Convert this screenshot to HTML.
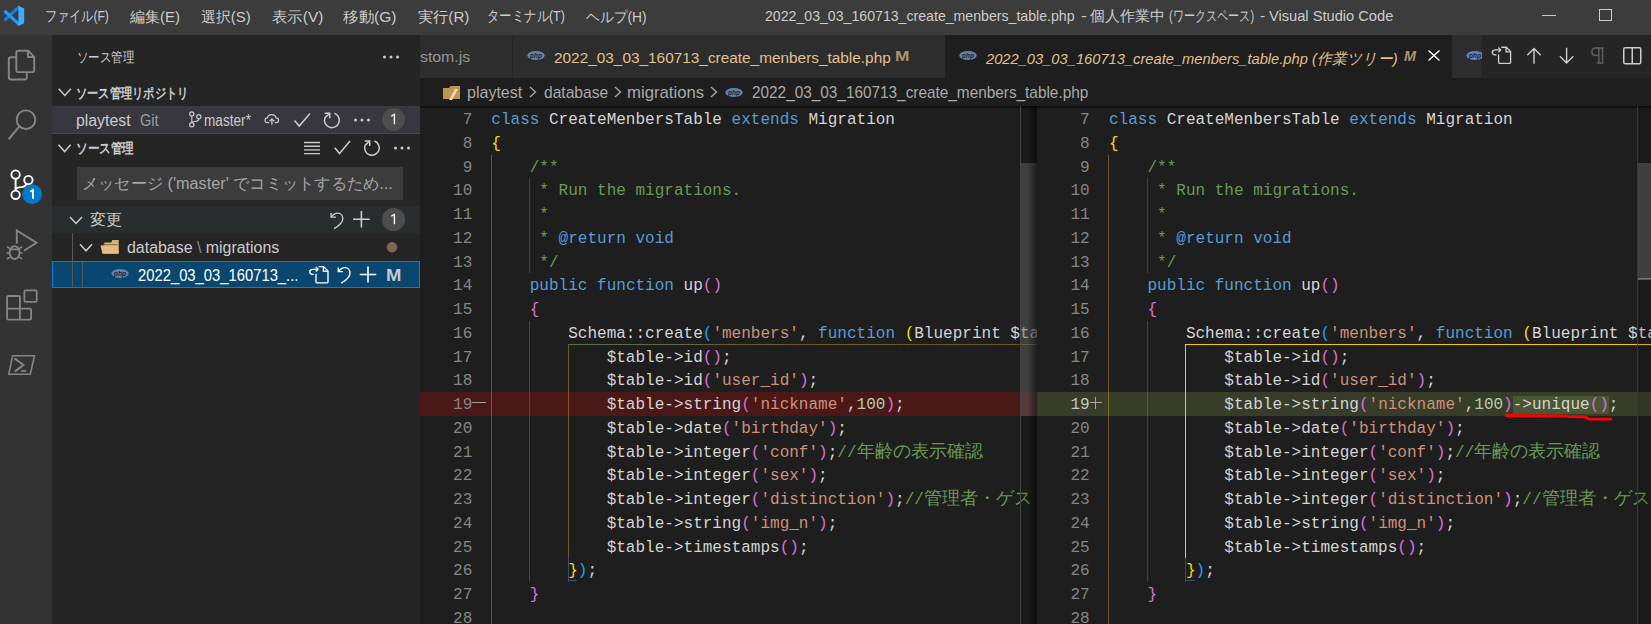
<!DOCTYPE html>
<html><head><meta charset="utf-8"><style>
*{box-sizing:border-box;margin:0;padding:0}
html,body{width:1651px;height:624px;overflow:hidden;background:#1e1e1e;font-family:"Liberation Sans",sans-serif;color:#cccccc}
.abs{position:absolute}
#title{position:absolute;left:0;top:0;width:1651px;height:35px;background:#3c3c3c}
.menu{position:absolute;top:0;height:35px;line-height:35px;font-size:15px;color:#cccccc;white-space:nowrap}
#act{position:absolute;left:0;top:35px;width:52px;height:589px;background:#333333}
#side{position:absolute;left:52px;top:35px;width:368px;height:589px;background:#252526}
.st{position:absolute;white-space:nowrap;font-size:14px;color:#cccccc}
#tabs{position:absolute;left:420px;top:35px;width:1231px;height:43px;background:#252526}
.tab{position:absolute;top:0;height:43px;background:#2d2d2d;white-space:nowrap;font-size:15.5px;line-height:43px}
#bc{position:absolute;left:420px;top:78px;width:1231px;height:28px;background:#1e1e1e;font-size:15.5px;line-height:28px;color:#a9a9a9;white-space:nowrap}
.ed{position:absolute;top:35px;height:589px;overflow:hidden}
.band{position:absolute;left:0;width:100%;height:23.75px}
.ln{position:absolute;margin-top:2px;left:0;width:52px;text-align:right;font-family:"Liberation Mono",monospace;font-size:16.03px;line-height:23.75px;color:#858585}
.ln.act{color:#c6c6c6}
.sign{position:absolute;margin-top:2px;left:52px;width:14px;font-family:"Liberation Mono",monospace;font-size:16.03px;line-height:23.75px;color:#c6c6c6}
.cl{position:absolute;margin-top:2px;left:71px;white-space:pre;font-family:"Liberation Mono",monospace;font-size:16.03px;line-height:23.75px;color:#d4d4d4}
.jp{font-size:17.5px;line-height:0}
.ins{background:#4b5632}
.T{position:absolute;white-space:nowrap;transform-origin:0 0}
.g{position:absolute}
.g{z-index:1}
.cl,.ln,.sign{z-index:2}
.C{position:absolute;overflow:hidden;z-index:8}

</style></head><body>
<div id="title">
  <svg class="abs" style="left:0;top:0" width="35" height="35" viewBox="0 0 35 35">
    <path d="M18.6 7.4 L5.4 19.4" stroke="#1b7dcc" stroke-width="3.3" stroke-linecap="round"/>
    <path d="M5.4 11.8 L18.6 23.9" stroke="#229cf0" stroke-width="3.3" stroke-linecap="round"/>
    <path d="M18.4 5.7 L23.6 8.3 C24 8.5 24.2 8.8 24.2 9.3 V22.6 C24.2 23.1 24 23.4 23.6 23.6 L18.4 26.1 Z" fill="#3caeff"/>
  </svg>
                    <div class="abs" style="left:1542px;top:15px;width:14px;height:1px;background:#cccccc"></div>
  <div class="abs" style="left:1599px;top:8.6px;width:13.4px;height:12.8px;border:1.2px solid #cccccc"></div>
</div>
<div id="act">
  <svg class="abs" style="left:0;top:0" width="52" height="589" viewBox="0 35 52 589" fill="none" stroke="#858585" stroke-width="1.9">
    <!-- explorer -->
    <path d="M16.2 57.2 H11 C9.5 57.2 8.8 58 8.8 59.5 V77.3 C8.8 78.8 9.5 79.5 11 79.5 H24.6 C26.1 79.5 26.8 78.8 26.8 77.3 V72.2"/>
    <path d="M18.5 50.8 H28.2 L34.2 56.8 V69.9 C34.2 71.4 33.5 72.1 32 72.1 H18.5 C17 72.1 16.3 71.4 16.3 69.9 V53 C16.3 51.5 17 50.8 18.5 50.8 Z"/>
    <path d="M28 51 V57 H34"/>
    <!-- search -->
    <circle cx="26" cy="119.7" r="9.3"/>
    <path d="M19.4 126.3 L8.6 139.3" stroke-width="2.1"/>
    <!-- scm -->
    <g stroke="#ffffff" stroke-width="1.9">
      <circle cx="15.6" cy="174.6" r="4.2"/>
      <circle cx="28.4" cy="180.1" r="4.2"/>
      <circle cx="15.6" cy="194.8" r="4.2"/>
      <path d="M15.6 178.8 V190.6"/>
      <path d="M26.6 184 C25 186.6 22.5 187.4 19.5 187.4 C17 187.4 15.6 188.5 15.6 190"/>
    </g>
    <!-- debug -->
    <path d="M16.8 243.6 V230.4 L36.5 242.8 L24 250.8"/>
    <ellipse cx="14.6" cy="252.6" rx="4.9" ry="6.4" stroke-width="1.8"/>
    <path d="M9.8 249.4 H19.4 M10 248.6 L7 246.8 M6.6 253 H9.6 M10 257.2 L7 259.2 M19.2 248.6 L22.2 246.8 M19.6 253 H22.6 M19.2 257.2 L22.2 259.2" stroke-width="1.6"/>
    <!-- extensions -->
    <path d="M8.3 296 H18.7 C19.4 296 19.9 296.5 19.9 297.2 V308.6 H29.9 C30.6 308.6 31.1 309.1 31.1 309.8 V318.4 C31.1 319.1 30.6 319.6 29.9 319.6 H8.3 C7.6 319.6 7.1 319.1 7.1 318.4 V297.2 C7.1 296.5 7.6 296 8.3 296 Z M7.1 308.6 H19.9 V319.6" stroke-width="1.8"/>
    <rect x="24.4" y="290.4" width="12.3" height="11.5" rx="1.2" stroke-width="1.8"/>
    <!-- terminal -->
    <path d="M12.6 355.8 H34.5 L30.3 374.3 H8.75 Z" stroke-width="1.6"/>
    <path d="M14.4 358.4 L23.4 365 L14.8 371.6" stroke-width="2"/>
    <path d="M21 371 H26.2" stroke-width="1.8"/>
  </svg>
  <svg class="abs" style="left:0;top:0" width="52" height="589" viewBox="0 35 52 589">
    <circle cx="32.2" cy="194.2" r="9.9" fill="#007acc"/>
    <path d="M30.3 191.7 L33 189.8 V198.8" stroke="#ffffff" stroke-width="1.9" fill="none" stroke-linejoin="round"/>
  </svg>
</div>
<div id="side">
  <div class="abs" style="left:0;top:71px;width:368px;height:27.5px;background:#37373d"></div>
  <div class="abs" style="left:0;top:98px;width:368px;height:1px;background:#474748"></div>
  <div class="abs" style="left:25px;top:132px;width:325.5px;height:33px;background:#3c3c3c"></div>
  <div class="abs" style="left:0;top:170.5px;width:368px;height:27.5px;background:#2a2d2e"></div>
  <div class="abs" style="left:20px;top:198px;width:1px;height:55px;background:#585858"></div>
  <div class="abs" style="left:0;top:225.5px;width:368px;height:27.5px;background:#094771;border:1px solid #007fd4"></div>
  <div class="abs" style="left:20px;top:226.5px;width:1px;height:25.5px;background:#585858"></div>
  <div class="abs" style="left:30.4px;top:226.5px;width:1px;height:25.5px;background:#585858"></div>
</div>
<div id="tabs">
  <div class="tab" style="left:0;width:92px;color:#969696"></div>
  <div class="tab" style="left:93px;width:432px;color:#e2c08d">
    <svg class="abs" style="left:14px;top:16px" width="18" height="9" viewBox="0 0 18 9"><ellipse cx="9" cy="4.5" rx="8.7" ry="4.5" fill="#6181b6"/><text x="9" y="6.6" font-size="6.5" font-style="italic" font-weight="bold" text-anchor="middle" fill="#1e2330" font-family="Liberation Sans">php</text></svg>
    </div>
  <div class="tab" style="left:525px;width:507px;background:#1e1e1e;color:#e2c08d;font-style:italic">
    <svg class="abs" style="left:14px;top:16px" width="18" height="9" viewBox="0 0 18 9"><ellipse cx="9" cy="4.5" rx="8.7" ry="4.5" fill="#6181b6"/><text x="9" y="6.6" font-size="6.5" font-style="italic" font-weight="bold" text-anchor="middle" fill="#1e2330" font-family="Liberation Sans">php</text></svg>
    
    <svg class="abs" style="left:483px;top:14.8px" width="12" height="11" fill="none" stroke="#ffffff" stroke-width="1.35"><path d="M0.5 0.5 L11.5 10.5 M11.5 0.5 L0.5 10.5"/></svg>
  </div>
  <div class="tab" style="left:1032px;width:30px;overflow:hidden">
    <svg class="abs" style="left:14px;top:16px" width="18" height="9" viewBox="0 0 18 9"><ellipse cx="9" cy="4.5" rx="8.7" ry="4.5" fill="#6181b6"/><text x="9" y="6.6" font-size="6.5" font-style="italic" font-weight="bold" text-anchor="middle" fill="#1e2330" font-family="Liberation Sans">php</text></svg>
  </div>
  
  
  
  <svg class="abs" style="left:1168px;top:9px" width="16" height="22" viewBox="1588 44 16 22" fill="none" stroke="#5e5e5e" stroke-width="1.5"><path d="M1598.8 48 H1596 C1593.4 48 1591.9 49.7 1591.9 51.8 C1591.9 53.9 1593.4 55.6 1596 55.6 H1598.8"/><path d="M1598.9 48 V63 M1602.5 48 V63 M1596 48 H1603.6 M1596.7 63.1 H1603.6"/></svg>
  <svg class="abs" style="left:1203px;top:12px" width="19" height="18" fill="none" stroke="#cccccc" stroke-width="1.5"><rect x="0.75" y="0.75" width="17" height="16" rx="1.5"/><path d="M9.25 1 V17"/></svg>
</div>
<div id="bc">
  <svg class="abs" style="left:22.7px;top:7.5px" width="17" height="14"><path d="M0 2 H6 L7.5 0 H17 V13 H0 Z" fill="#c09553"/><path d="M6 14 L12 3 H15 L9 14 Z" fill="#f3dfb1"/></svg>
  
  <svg class="abs" style="left:109px;top:8px" width="8" height="12" fill="none" stroke="#a9a9a9" stroke-width="1.3"><path d="M1 1 L6.5 6 L1 11"/></svg>
  
  <svg class="abs" style="left:194px;top:8px" width="8" height="12" fill="none" stroke="#a9a9a9" stroke-width="1.3"><path d="M1 1 L6.5 6 L1 11"/></svg>
  
  <svg class="abs" style="left:290px;top:8px" width="8" height="12" fill="none" stroke="#a9a9a9" stroke-width="1.3"><path d="M1 1 L6.5 6 L1 11"/></svg>
  <svg class="abs" style="left:304.7px;top:9.5px" width="18" height="9" viewBox="0 0 18 9"><ellipse cx="9" cy="4.5" rx="8.7" ry="4.5" fill="#6181b6"/><text x="9" y="6.6" font-size="6.5" font-style="italic" font-weight="bold" text-anchor="middle" fill="#1e2330" font-family="Liberation Sans">php</text></svg>
  
</div>
<div class="abs" style="left:420px;top:106px;width:1231px;height:3px;background:linear-gradient(#000000aa,#00000000)"></div>
<div class="ed" style="left:420px;width:617px">
<div class="band" style="top:357.0px;background:#4b1818"></div>
<div class="ln" style="top:72.0px;margin-left:0.3px">7</div>
<div class="cl" style="top:72.0px;margin-left:0.3px"><span style="color:#569cd6">class</span> CreateMenbersTable <span style="color:#569cd6">extends</span> Migration</div>
<div class="ln" style="top:95.75px;margin-left:0.3px">8</div>
<div class="cl" style="top:95.75px;margin-left:0.3px"><span style="color:#ffd700">{</span></div>
<div class="ln" style="top:119.5px;margin-left:0.3px">9</div>
<div class="cl" style="top:119.5px;margin-left:0.3px">    <span style="color:#6a9955">/**</span></div>
<div class="ln" style="top:143.25px;margin-left:0.3px">10</div>
<div class="cl" style="top:143.25px;margin-left:0.3px">     <span style="color:#6a9955">* Run the migrations.</span></div>
<div class="ln" style="top:167.0px;margin-left:0.3px">11</div>
<div class="cl" style="top:167.0px;margin-left:0.3px">     <span style="color:#6a9955">*</span></div>
<div class="ln" style="top:190.75px;margin-left:0.3px">12</div>
<div class="cl" style="top:190.75px;margin-left:0.3px">     <span style="color:#6a9955">* </span><span style="color:#569cd6">@return</span> <span style="color:#569cd6">void</span></div>
<div class="ln" style="top:214.5px;margin-left:0.3px">13</div>
<div class="cl" style="top:214.5px;margin-left:0.3px">     <span style="color:#6a9955">*/</span></div>
<div class="ln" style="top:238.25px;margin-left:0.3px">14</div>
<div class="cl" style="top:238.25px;margin-left:0.3px">    <span style="color:#569cd6">public</span> <span style="color:#569cd6">function</span> up<span style="color:#da70d6">()</span></div>
<div class="ln" style="top:262.0px;margin-left:0.3px">15</div>
<div class="cl" style="top:262.0px;margin-left:0.3px">    <span style="color:#da70d6">{</span></div>
<div class="ln" style="top:285.75px;margin-left:0.3px">16</div>
<div class="cl" style="top:285.75px;margin-left:0.3px">        Schema::create<span style="color:#179fff">(</span><span style="color:#ce9178">&#x27;menbers&#x27;</span>, <span style="color:#569cd6">function</span> <span style="color:#ffd700">(</span>Blueprint $table<span style="color:#ffd700">)</span> <span style="color:#ffd700">{</span></div>
<div class="ln" style="top:309.5px;margin-left:0.3px">17</div>
<div class="cl" style="top:309.5px;margin-left:0.3px">            $table->id<span style="color:#da70d6">()</span>;</div>
<div class="ln" style="top:333.25px;margin-left:0.3px">18</div>
<div class="cl" style="top:333.25px;margin-left:0.3px">            $table->id<span style="color:#da70d6">(</span><span style="color:#ce9178">&#x27;user_id&#x27;</span><span style="color:#da70d6">)</span>;</div>
<div class="ln" style="top:357.0px;margin-left:0.3px">19</div>
<div class="g" style="z-index:3;left:52px;top:366.8px;width:13.7px;height:1.2px;background:#a4a4a4"></div>
<div class="cl" style="top:357.0px;margin-left:0.3px">            $table->string<span style="color:#da70d6">(</span><span style="color:#ce9178">&#x27;nickname&#x27;</span>,<span style="color:#b5cea8">100</span><span style="color:#da70d6">)</span>;</div>
<div class="ln" style="top:380.75px;margin-left:0.3px">20</div>
<div class="cl" style="top:380.75px;margin-left:0.3px">            $table->date<span style="color:#da70d6">(</span><span style="color:#ce9178">&#x27;birthday&#x27;</span><span style="color:#da70d6">)</span>;</div>
<div class="ln" style="top:404.5px;margin-left:0.3px">21</div>
<div class="cl" style="top:404.5px;margin-left:0.3px">            $table->integer<span style="color:#da70d6">(</span><span style="color:#ce9178">&#x27;conf&#x27;</span><span style="color:#da70d6">)</span>;<span style="color:#6a9955">//</span><span class="jp" style="color:#6a9955">年齢の表示確認</span></div>
<div class="ln" style="top:428.25px;margin-left:0.3px">22</div>
<div class="cl" style="top:428.25px;margin-left:0.3px">            $table->integer<span style="color:#da70d6">(</span><span style="color:#ce9178">&#x27;sex&#x27;</span><span style="color:#da70d6">)</span>;</div>
<div class="ln" style="top:452.0px;margin-left:0.3px">23</div>
<div class="cl" style="top:452.0px;margin-left:0.3px">            $table->integer<span style="color:#da70d6">(</span><span style="color:#ce9178">&#x27;distinction&#x27;</span><span style="color:#da70d6">)</span>;<span style="color:#6a9955">//</span><span class="jp" style="color:#6a9955">管理者・ゲスト・一般ユーザー</span></div>
<div class="ln" style="top:475.75px;margin-left:0.3px">24</div>
<div class="cl" style="top:475.75px;margin-left:0.3px">            $table->string<span style="color:#da70d6">(</span><span style="color:#ce9178">&#x27;img_n&#x27;</span><span style="color:#da70d6">)</span>;</div>
<div class="ln" style="top:499.5px;margin-left:0.3px">25</div>
<div class="cl" style="top:499.5px;margin-left:0.3px">            $table->timestamps<span style="color:#da70d6">()</span>;</div>
<div class="ln" style="top:523.25px;margin-left:0.3px">26</div>
<div class="cl" style="top:523.25px;margin-left:0.3px">        <span style="color:#ffd700">}</span><span style="color:#179fff">)</span>;</div>
<div class="ln" style="top:547.0px;margin-left:0.3px">27</div>
<div class="cl" style="top:547.0px;margin-left:0.3px">    <span style="color:#da70d6">}</span></div>
<div class="ln" style="top:570.75px;margin-left:0.3px">28</div>
<div class="cl" style="top:570.75px;margin-left:0.3px"></div>
<div class="g" style="left:71.00px;top:119.50px;width:1.3px;height:469.50px;background:rgba(255,215,0,0.33)"></div>
<div class="g" style="left:108.80px;top:143.25px;width:1px;height:95.00px;background:#404040"></div>
<div class="g" style="left:108.80px;top:285.75px;width:1.3px;height:261.25px;background:rgba(218,112,214,0.31)"></div>
<div class="g" style="left:148.10px;top:309.50px;width:1.3px;height:213.75px;background:rgba(255,215,0,0.34)"></div>
<div class="g" style="left:148.10px;top:308.90px;width:133.90px;height:1.3px;background:#5f6b45"></div>
<div class="g" style="left:282.00px;top:308.90px;width:335.00px;height:1.3px;background:#6b5c1e"></div>
<div class="g" style="left:148.10px;top:523.25px;width:1.2px;height:23.25px;background:#35506b"></div>
<div class="g" style="left:148.10px;top:545.20px;width:9.40px;height:1.2px;background:#35506b"></div>
</div>
<div class="ed" style="left:1037px;width:614px">
<div class="band" style="top:357.0px;background:#373d29"></div>
<div class="ln" style="top:72.0px;margin-left:0.7px">7</div>
<div class="cl" style="top:72.0px;margin-left:1.0px"><span style="color:#569cd6">class</span> CreateMenbersTable <span style="color:#569cd6">extends</span> Migration</div>
<div class="ln" style="top:95.75px;margin-left:0.7px">8</div>
<div class="cl" style="top:95.75px;margin-left:1.0px"><span style="color:#ffd700">{</span></div>
<div class="ln" style="top:119.5px;margin-left:0.7px">9</div>
<div class="cl" style="top:119.5px;margin-left:1.0px">    <span style="color:#6a9955">/**</span></div>
<div class="ln" style="top:143.25px;margin-left:0.7px">10</div>
<div class="cl" style="top:143.25px;margin-left:1.0px">     <span style="color:#6a9955">* Run the migrations.</span></div>
<div class="ln" style="top:167.0px;margin-left:0.7px">11</div>
<div class="cl" style="top:167.0px;margin-left:1.0px">     <span style="color:#6a9955">*</span></div>
<div class="ln" style="top:190.75px;margin-left:0.7px">12</div>
<div class="cl" style="top:190.75px;margin-left:1.0px">     <span style="color:#6a9955">* </span><span style="color:#569cd6">@return</span> <span style="color:#569cd6">void</span></div>
<div class="ln" style="top:214.5px;margin-left:0.7px">13</div>
<div class="cl" style="top:214.5px;margin-left:1.0px">     <span style="color:#6a9955">*/</span></div>
<div class="ln" style="top:238.25px;margin-left:0.7px">14</div>
<div class="cl" style="top:238.25px;margin-left:1.0px">    <span style="color:#569cd6">public</span> <span style="color:#569cd6">function</span> up<span style="color:#da70d6">()</span></div>
<div class="ln" style="top:262.0px;margin-left:0.7px">15</div>
<div class="cl" style="top:262.0px;margin-left:1.0px">    <span style="color:#da70d6">{</span></div>
<div class="ln" style="top:285.75px;margin-left:0.7px">16</div>
<div class="cl" style="top:285.75px;margin-left:1.0px">        Schema::create<span style="color:#179fff">(</span><span style="color:#ce9178">&#x27;menbers&#x27;</span>, <span style="color:#569cd6">function</span> <span style="color:#ffd700">(</span>Blueprint $table<span style="color:#ffd700">)</span> <span style="color:#ffd700">{</span></div>
<div class="ln" style="top:309.5px;margin-left:0.7px">17</div>
<div class="cl" style="top:309.5px;margin-left:1.0px">            $table->id<span style="color:#da70d6">()</span>;</div>
<div class="ln" style="top:333.25px;margin-left:0.7px">18</div>
<div class="cl" style="top:333.25px;margin-left:1.0px">            $table->id<span style="color:#da70d6">(</span><span style="color:#ce9178">&#x27;user_id&#x27;</span><span style="color:#da70d6">)</span>;</div>
<div class="ln act" style="top:357.0px;margin-left:0.7px">19</div>
<div class="g" style="z-index:3;left:53.299999999999955px;top:367.1px;width:11.5px;height:1.1px;background:#a4a4a4"></div>
<div class="g" style="z-index:3;left:58.40000000000009px;top:362px;width:1.1px;height:11.5px;background:#a4a4a4"></div>
<div class="cl" style="top:357.0px;margin-left:1.0px">            $table->string<span style="color:#da70d6">(</span><span style="color:#ce9178">&#x27;nickname&#x27;</span>,<span style="color:#b5cea8">100</span><span style="color:#da70d6">)</span><span class="ins">->unique<span style="color:#da70d6">()</span></span>;</div>
<div class="ln" style="top:380.75px;margin-left:0.7px">20</div>
<div class="cl" style="top:380.75px;margin-left:1.0px">            $table->date<span style="color:#da70d6">(</span><span style="color:#ce9178">&#x27;birthday&#x27;</span><span style="color:#da70d6">)</span>;</div>
<div class="ln" style="top:404.5px;margin-left:0.7px">21</div>
<div class="cl" style="top:404.5px;margin-left:1.0px">            $table->integer<span style="color:#da70d6">(</span><span style="color:#ce9178">&#x27;conf&#x27;</span><span style="color:#da70d6">)</span>;<span style="color:#6a9955">//</span><span class="jp" style="color:#6a9955">年齢の表示確認</span></div>
<div class="ln" style="top:428.25px;margin-left:0.7px">22</div>
<div class="cl" style="top:428.25px;margin-left:1.0px">            $table->integer<span style="color:#da70d6">(</span><span style="color:#ce9178">&#x27;sex&#x27;</span><span style="color:#da70d6">)</span>;</div>
<div class="ln" style="top:452.0px;margin-left:0.7px">23</div>
<div class="cl" style="top:452.0px;margin-left:1.0px">            $table->integer<span style="color:#da70d6">(</span><span style="color:#ce9178">&#x27;distinction&#x27;</span><span style="color:#da70d6">)</span>;<span style="color:#6a9955">//</span><span class="jp" style="color:#6a9955">管理者・ゲスト・一般ユーザー</span></div>
<div class="ln" style="top:475.75px;margin-left:0.7px">24</div>
<div class="cl" style="top:475.75px;margin-left:1.0px">            $table->string<span style="color:#da70d6">(</span><span style="color:#ce9178">&#x27;img_n&#x27;</span><span style="color:#da70d6">)</span>;</div>
<div class="ln" style="top:499.5px;margin-left:0.7px">25</div>
<div class="cl" style="top:499.5px;margin-left:1.0px">            $table->timestamps<span style="color:#da70d6">()</span>;</div>
<div class="ln" style="top:523.25px;margin-left:0.7px">26</div>
<div class="cl" style="top:523.25px;margin-left:1.0px">        <span style="color:#ffd700">}</span><span style="color:#179fff">)</span>;</div>
<div class="ln" style="top:547.0px;margin-left:0.7px">27</div>
<div class="cl" style="top:547.0px;margin-left:1.0px">    <span style="color:#da70d6">}</span></div>
<div class="ln" style="top:570.75px;margin-left:0.7px">28</div>
<div class="cl" style="top:570.75px;margin-left:1.0px"></div>
<div class="g" style="left:71.00px;top:119.50px;width:1.3px;height:469.50px;background:rgba(255,215,0,0.33)"></div>
<div class="g" style="left:109.90px;top:143.25px;width:1px;height:95.00px;background:#404040"></div>
<div class="g" style="left:109.90px;top:285.75px;width:1.3px;height:261.25px;background:rgba(218,112,214,0.31)"></div>
<div class="g" style="left:148.10px;top:309.50px;width:1.15px;height:213.75px;background:#f2cc00"></div>
<div class="g" style="left:148.10px;top:308.90px;width:465.90px;height:1.2px;background:#f2cc00"></div>
<div class="g" style="left:148.30px;top:523.25px;width:1.2px;height:23.25px;background:#35506b"></div>
<div class="g" style="left:148.30px;top:545.20px;width:9.50px;height:1.2px;background:#35506b"></div>
</div>
<!-- left scrollbar -->
<div class="abs" style="left:1020px;top:106px;width:1px;height:518px;background:#454545;z-index:5"></div>
<div class="abs" style="left:1021px;top:106px;width:16px;height:518px;background:rgba(0,0,0,0.12);z-index:5"></div>
<div class="abs" style="left:1021px;top:162.5px;width:16px;height:253.25px;background:rgba(121,121,121,0.4);z-index:5"></div>
<div class="abs" style="left:1027px;top:106px;width:10px;height:518px;background:linear-gradient(90deg,rgba(0,0,0,0),rgba(0,0,0,0.5));z-index:5"></div>
<!-- right scrollbar -->
<div class="abs" style="left:1637px;top:106px;width:1px;height:518px;background:#383838;z-index:5"></div>
<div class="abs" style="left:1638px;top:106px;width:13px;height:518px;background:rgba(0,0,0,0.12);z-index:5"></div>
<div class="abs" style="left:1638px;top:162.5px;width:13px;height:116px;background:rgba(121,121,121,0.4);z-index:5"></div>
<div class="abs" style="left:1638px;top:278px;width:13px;height:2px;background:rgba(160,160,160,0.5);z-index:5"></div>
<!-- annotation -->
<svg class="abs" style="left:0;top:0;z-index:6" width="1651" height="624" fill="none"><path d="M1506 415.5 L1566 415.8 L1568 416.6 L1585 416.8 L1589 419.2 L1611 419.2" stroke="#ff0000" stroke-width="2.8" stroke-linecap="round" stroke-linejoin="round"/></svg>

<!-- sidebar icons overlay (absolute page coords) -->
<svg class="abs" style="left:0;top:0;z-index:7" width="1651" height="624" viewBox="0 0 1651 624" fill="none" stroke="#cccccc" stroke-width="1.5">
  <!-- header ellipsis -->
  <g fill="#cccccc" stroke="none"><circle cx="384.5" cy="57" r="1.5"/><circle cx="391" cy="57" r="1.5"/><circle cx="397.5" cy="57" r="1.5"/></g>
  <!-- chevrons -->
  <path d="M58.7 88.7 L64.8 95.5 L70.9 88.7"/>
  <path d="M58.5 144.8 L64.6 151.6 L70.7 144.8"/>
  <path d="M70 217 L76 223.5 L82 217"/>
  <path d="M80 244.3 L86 250.8 L92 244.3"/>
  <!-- branch -->
  <g stroke-width="1.2">
    <circle cx="191.8" cy="114" r="2.1"/><circle cx="191.8" cy="124.8" r="2.1"/><circle cx="198.8" cy="116.8" r="2.1"/>
    <path d="M191.8 116.1 V122.7 M198.8 118.9 C198.8 121 197 121.3 194.5 121.5 C193 121.6 192.2 122 191.9 122.6"/>
  </g>
  <!-- cloud upload -->
  <g stroke-width="1.2">
    <path d="M269 122.6 H267.3 C265.8 122.6 265 121.4 265 120.2 C265 118.9 266 117.9 267.4 117.9 C267.8 115.8 269.6 114.6 271.8 114.6 C274 114.6 275.6 116 276 117.9 C277.6 117.9 278.6 119 278.6 120.3 C278.6 121.5 277.7 122.6 276.3 122.6 H274.8"/>
    <path d="M271.9 125 V119 M269.4 121.3 L271.9 118.8 L274.4 121.3"/>
  </g>
  <!-- check -->
  <path d="M294.5 120.5 L299.2 126 L310 113.5"/>
  <path d="M334.8 147.8 L339.5 153.5 L350 141"/>
  <!-- refresh -->
  <path d="M334.43 113.25 A7.4 7.4 0 1 1 324.95 117.67 L329.70 113.20"/><path d="M324.70 113.20 H329.70 V118.20"/>
  <path d="M374.40 141.04 A7.3 7.3 0 1 1 365.04 145.40 L369.70 140.90"/><path d="M364.70 140.90 H369.70 V145.90"/>
  <!-- ellipsis row -->
  <g fill="#cccccc" stroke="none"><circle cx="355.5" cy="120" r="1.5"/><circle cx="362" cy="120" r="1.5"/><circle cx="368.5" cy="120" r="1.5"/></g>
  <g fill="#cccccc" stroke="none"><circle cx="395.5" cy="148" r="1.5"/><circle cx="402" cy="148" r="1.5"/><circle cx="408.5" cy="148" r="1.5"/></g>
  <!-- list flat -->
  <path d="M304 142.5 H320 M304 146.2 H320 M304 149.9 H320 M304 153.6 H320" stroke-width="1.4"/>
  <!-- badges -->
  <circle cx="393.6" cy="119.4" r="11.4" fill="#4d4d4d" stroke="none"/>
  <circle cx="393.6" cy="219.5" r="11.6" fill="#4d4d4d" stroke="none"/>
  <path d="M391.3 116.2 L394.4 114.2 V124.2" stroke="#ffffff" stroke-width="1.35" stroke-linejoin="round"/>
  <path d="M391.3 216.3 L394.4 214.3 V224.3" stroke="#ffffff" stroke-width="1.35" stroke-linejoin="round"/>
  <!-- discard -->
  <g transform="translate(-7.2,-54.5)" stroke="#cccccc" stroke-width="1.4"><path d="M338.3 267.4 V271.6 H343.1"/><path d="M338.6 271.4 C340.3 269 342.5 267.6 345 267.6 C347.8 267.6 350 270 350 273.2 C350 276.8 346.5 280 341.2 283.2"/></g>
  <g transform="translate(0,0)" stroke="#ffffff" stroke-width="1.4"><path d="M338.3 267.4 V271.6 H343.1"/><path d="M338.6 271.4 C340.3 269 342.5 267.6 345 267.6 C347.8 267.6 350 270 350 273.2 C350 276.8 346.5 280 341.2 283.2"/></g>
  <!-- plus -->
  <path d="M361.4 211 V227.6 M353 219.3 H369.8" stroke-width="1.6"/>
  <path d="M368 266.5 V282.5 M359.7 274.5 H376.3" stroke="#ffffff" stroke-width="1.6"/>
  <!-- folder -->
  <g stroke="none">
    <path d="M104.3 253.6 V242.6 H111.3 L112.3 239.9 H118.7 V253.6 Z" fill="#d9b273"/>
    <path d="M102.8 244.2 H117.6 V245.4 H102.8 Z" fill="#7d6846"/>
    <path d="M100.5 245.4 H117.9 L118.7 253.7 H102.5 Z" fill="#e2bd80"/>
  </g>
  <!-- modified dot -->
  <circle cx="392" cy="247.2" r="5.2" fill="#7b6a50" stroke="none"/>
  <!-- php icon in tree -->
  <ellipse cx="120" cy="273.5" rx="8.6" ry="4.6" fill="#6181b6" stroke="none"/>
  <text x="120" y="275.8" font-size="6.8" font-style="italic" font-weight="bold" text-anchor="middle" fill="#1e2330" stroke="none" font-family="Liberation Sans">php</text>
  <!-- editor action arrows -->
  <g stroke="#cccccc" stroke-width="1.4"><path d="M1534 48.6 V63.8 M1527.3 55.3 L1534 48.6 L1540.7 55.3"/><path d="M1566.6 47.8 V63 M1559.9 56.3 L1566.6 63 L1573.3 56.3"/></g>
  <!-- open file icon -->
  <g transform="translate(0,0)" stroke="#ffffff" stroke-width="1.35" fill="none">
    <path d="M316 273.8 V282 C316 282.5 316.3 282.8 316.8 282.8 H327.2 C327.7 282.8 328 282.5 328 282 V271 L323.6 266.6 H318.6"/>
    <path d="M323.4 266.7 V271.2 H328"/>
    <path d="M313.8 274.4 C311.2 274.4 309.7 273.2 309.7 271.7 C309.7 270.2 311.2 269.3 313.2 269.3 H318"/>
    <path d="M315.8 267 L318.1 269.3 L315.8 271.6"/>
  </g>
  <g transform="translate(1182.6,-219.4)" stroke="#cccccc" stroke-width="1.35" fill="none">
    <path d="M316 273.8 V282 C316 282.5 316.3 282.8 316.8 282.8 H327.2 C327.7 282.8 328 282.5 328 282 V271 L323.6 266.6 H318.6"/>
    <path d="M323.4 266.7 V271.2 H328"/>
    <path d="M313.8 274.4 C311.2 274.4 309.7 273.2 309.7 271.7 C309.7 270.2 311.2 269.3 313.2 269.3 H318"/>
    <path d="M315.8 267 L318.1 269.3 L315.8 271.6"/>
  </g>
</svg>

<div class="C" style="left:41.06px;top:-9.92px;width:72.99px;height:51px"><div class="T" id="m1" style="left:3.54px;top:8px;line-height:35px;transform:scaleX(0.8069);font-size:15px;color:#cccccc">ファイル(F)</div></div>
<div class="C" style="left:125.00px;top:-9.12px;width:60.00px;height:51px"><div class="T" id="m2" style="left:5.00px;top:8px;line-height:35px;transform:scaleX(1.0000);font-size:15px;color:#cccccc">編集(E)</div></div>
<div class="C" style="left:195.90px;top:-9.12px;width:59.60px;height:51px"><div class="T" id="m3" style="left:5.40px;top:8px;line-height:35px;transform:scaleX(0.9922);font-size:15px;color:#cccccc">選択(S)</div></div>
<div class="C" style="left:266.80px;top:-9.12px;width:60.90px;height:51px"><div class="T" id="m4" style="left:4.79px;top:8px;line-height:35px;transform:scaleX(1.0286);font-size:15px;color:#cccccc">表示(V)</div></div>
<div class="C" style="left:338.60px;top:-9.12px;width:62.80px;height:51px"><div class="T" id="m5" style="left:4.59px;top:8px;line-height:35px;transform:scaleX(1.0354);font-size:15px;color:#cccccc">移動(G)</div></div>
<div class="C" style="left:412.40px;top:-9.12px;width:61.10px;height:51px"><div class="T" id="m6" style="left:5.40px;top:8px;line-height:35px;transform:scaleX(1.0118);font-size:15px;color:#cccccc">実行(R)</div></div>
<div class="C" style="left:483.40px;top:-9.92px;width:87.00px;height:51px"><div class="T" id="m7" style="left:3.67px;top:8px;line-height:35px;transform:scaleX(0.8262);font-size:15px;color:#cccccc">ターミナル(T)</div></div>
<div class="C" style="left:581.00px;top:-9.12px;width:69.80px;height:51px"><div class="T" id="m8" style="left:5.00px;top:8px;line-height:35px;transform:scaleX(0.9201);font-size:15px;color:#cccccc">ヘルプ(H)</div></div>
<div class="C" style="left:759.40px;top:-9.96px;width:320.00px;height:51px"><div class="T" id="ttl1" style="left:5.43px;top:8px;line-height:35px;transform:scaleX(0.9421);font-size:15px;color:#cccccc">2022_03_03_160713_create_menbers_table.php</div></div>
<div class="C" style="left:1076.00px;top:-9.60px;width:16.00px;height:51px"><div class="T" id="ttl2" style="left:5.00px;top:8px;line-height:35px;transform:scaleX(1.2000);font-size:15px;color:#cccccc">-</div></div>
<div class="C" style="left:1084.70px;top:-9.68px;width:83.60px;height:51px"><div class="T" id="ttl3" style="left:5.20px;top:8px;line-height:35px;transform:scaleX(0.9947);font-size:15px;color:#cccccc">個人作業中</div></div>
<div class="C" style="left:1164.00px;top:-9.60px;width:95.40px;height:51px"><div class="T" id="ttl4" style="left:5.25px;top:8px;line-height:35px;transform:scaleX(0.7405);font-size:15px;color:#cccccc">(ワークスペース)</div></div>
<div class="C" style="left:1254.80px;top:-9.60px;width:15.20px;height:51px"><div class="T" id="ttl5" style="left:4.79px;top:8px;line-height:35px;transform:scaleX(1.0544);font-size:15px;color:#cccccc">-</div></div>
<div class="C" style="left:1264.00px;top:-9.60px;width:134.00px;height:51px"><div class="T" id="ttl6" style="left:5.00px;top:8px;line-height:35px;transform:scaleX(0.9764);font-size:15px;color:#cccccc">Visual Studio Code</div></div>
<div class="C" style="left:72.60px;top:41.08px;width:66.10px;height:32px"><div class="T" id="s1" style="left:4.03px;top:8px;line-height:16px;transform:scaleX(0.8178);font-size:14px;color:#cccccc">ソース管理</div></div>
<div class="C" style="left:72.60px;top:76.80px;width:119.00px;height:32px"><div class="T" id="s2" style="left:3.88px;top:8px;line-height:16px;transform:scaleX(0.8015);font-size:14px;font-weight:bold;color:#cccccc">ソース管理リポジトリ</div></div>
<div class="C" style="left:72.60px;top:99.44px;width:64.40px;height:43px"><div class="T" id="s3" style="left:3.60px;top:8px;line-height:27px;transform:scaleX(0.9893);font-size:16px;color:#cccccc">playtest</div></div>
<div class="C" style="left:135.00px;top:99.32px;width:29.00px;height:43px"><div class="T" id="s4" style="left:5.05px;top:8px;line-height:27px;transform:scaleX(0.9025);font-size:16px;color:#9d9d9d">Git</div></div>
<div class="C" style="left:200.60px;top:99.16px;width:56.20px;height:43px"><div class="T" id="s5" style="left:3.66px;top:8px;line-height:27px;transform:scaleX(0.8517);font-size:16px;color:#cccccc">master*</div></div>
<div class="C" style="left:71.80px;top:132.40px;width:67.70px;height:32px"><div class="T" id="s6" style="left:4.01px;top:8px;line-height:16px;transform:scaleX(0.8291);font-size:14px;font-weight:bold;color:#cccccc">ソース管理</div></div>
<div class="C" style="left:78.25px;top:159.00px;width:317.35px;height:49px"><div class="T" id="s7" style="left:3.48px;top:8px;line-height:33px;transform:scaleX(1.0135);font-size:16px;color:#a6a6a6">メッセージ ('master' でコミットするため...</div></div>
<div class="C" style="left:85.00px;top:198.38px;width:41.00px;height:43px"><div class="T" id="s8" style="left:5.00px;top:8px;line-height:27px;transform:scaleX(1.0000);font-size:16px;color:#cccccc">変更</div></div>
<div class="C" style="left:122.30px;top:225.56px;width:161.70px;height:43px"><div class="T" id="s9" style="left:4.80px;top:8px;line-height:27px;transform:scaleX(0.9948);font-size:16px;color:#cccccc">database<span style="color:#8a8a8a"> \ </span>migrations</div></div>
<div class="C" style="left:132.70px;top:253.70px;width:170.00px;height:43px"><div class="T" id="s10" style="left:5.22px;top:8px;line-height:27px;transform:scaleX(0.9245);font-size:16px;color:#ffffff">2022_03_03_160713_...</div></div>
<div class="C" style="left:382.50px;top:254.38px;width:23.30px;height:43px"><div class="T" id="s11" style="left:3.93px;top:8px;line-height:27px;transform:scaleX(1.1535);font-size:16px;font-weight:bold;color:#c8c8c8">M</div></div>
<div class="C" style="left:415.00px;top:27.44px;width:60.00px;height:59px"><div class="T" id="t1" style="left:5.00px;top:8px;line-height:43px;transform:scaleX(1.0204);font-size:15.5px;color:#969696">stom.js</div></div>
<div class="C" style="left:548.80px;top:27.56px;width:346.20px;height:59px"><div class="T" id="t2" style="left:4.80px;top:8px;line-height:43px;transform:scaleX(0.9917);font-size:15.5px;color:#e2c08d">2022_03_03_160713_create_menbers_table.php</div></div>
<div class="C" style="left:891.60px;top:26.44px;width:22.90px;height:59px"><div class="T" id="t3" style="left:3.54px;top:8px;line-height:43px;transform:scaleX(1.1205);font-size:15.5px;font-weight:bold;color:#ab946e">M</div></div>
<div class="C" style="left:981.30px;top:28.64px;width:420.90px;height:59px"><div class="T" id="t4" style="left:4.78px;top:8px;line-height:43px;transform:scaleX(0.9479);font-size:15.5px;font-style:italic;color:#e2c08d">2022_03_03_160713_create_menbers_table.php (作業ツリー)</div></div>
<div class="C" style="left:1399.00px;top:26.24px;width:23.00px;height:59px"><div class="T" id="t5" style="left:5.00px;top:8px;line-height:43px;transform:scaleX(0.9286);font-size:15.5px;font-weight:bold;font-style:italic;color:#ab946e">M</div></div>
<div class="C" style="left:462.70px;top:70.28px;width:64.90px;height:44px"><div class="T" id="b1" style="left:4.24px;top:8px;line-height:28px;transform:scaleX(0.9905);font-size:16.2px;color:#a9a9a9">playtest</div></div>
<div class="C" style="left:538.40px;top:70.12px;width:73.60px;height:44px"><div class="T" id="b2" style="left:5.41px;top:8px;line-height:28px;transform:scaleX(0.9638);font-size:16.2px;color:#a9a9a9">database</div></div>
<div class="C" style="left:623.20px;top:70.28px;width:85.70px;height:44px"><div class="T" id="b3" style="left:4.20px;top:8px;line-height:28px;transform:scaleX(1.0326);font-size:16.2px;color:#a9a9a9">migrations</div></div>
<div class="C" style="left:747.20px;top:69.88px;width:346.30px;height:44px"><div class="T" id="b4" style="left:5.21px;top:8px;line-height:28px;transform:scaleX(0.9482);font-size:16.2px;color:#a9a9a9">2022_03_03_160713_create_menbers_table.php</div></div>
</body></html>
